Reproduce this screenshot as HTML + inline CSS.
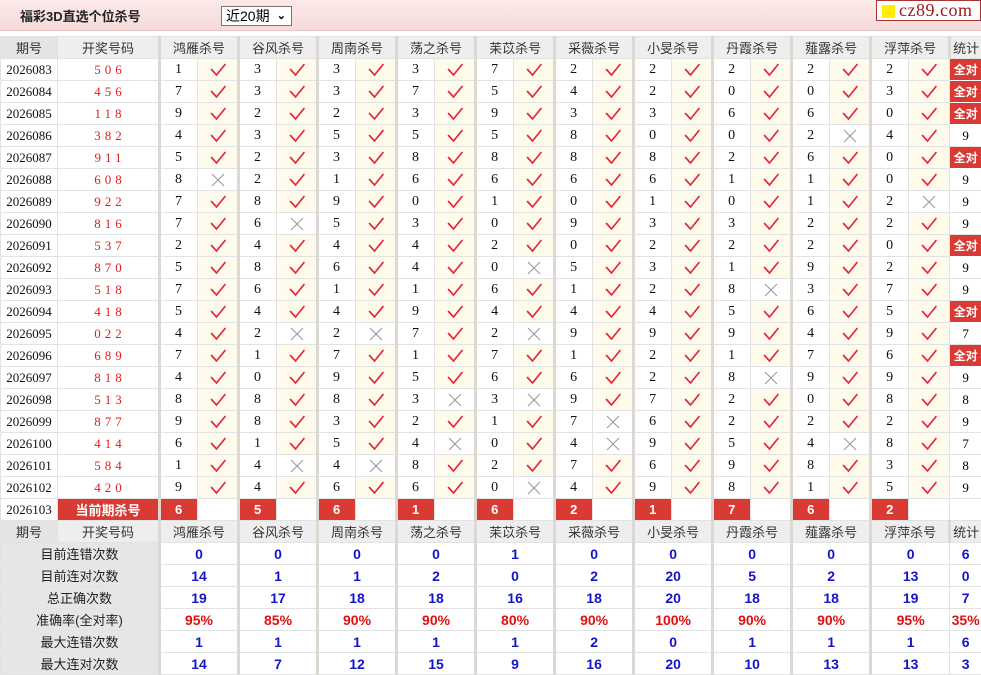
<!DOCTYPE html>
<html><head><meta charset="utf-8"><style>
*{margin:0;padding:0;box-sizing:border-box}
body{width:981px;height:673px;overflow:hidden;background:#fff;font-family:"Liberation Sans","Noto Sans CJK SC",sans-serif;position:relative}
.top{position:absolute;left:0;top:0;width:981px;height:31px;background:linear-gradient(#fbeaea,#f6dada);border-bottom:1px solid #e8c8c8}
.title{position:absolute;left:20px;top:6px;font-size:13px;font-weight:bold;color:#222}
.sel{position:absolute;left:221px;top:6px;width:71px;height:20px;border:1px solid #777;background:#fff;font-size:14px;line-height:18px;padding-left:4px;color:#000}
.sel span{position:absolute;right:5px;top:0;font-size:11px;font-weight:bold}
.logo{position:absolute;left:876px;top:0;width:105px;height:21px;background:#fff;border:1px solid #a33;font-family:"Liberation Serif",serif;font-size:18px;color:#a01818;line-height:19px;padding-left:22px;letter-spacing:.5px}
.logo i{position:absolute;left:5px;top:4px;width:13px;height:13px;background:#ffee00}
table{position:absolute;left:0;top:36px;border-collapse:collapse;table-layout:fixed;width:981px}
td{height:22px;border:1px solid #e2e2e2;font-size:13px;text-align:center;padding:0;overflow:hidden;white-space:nowrap}
tr.h td{background:#eeeeee;color:#333;font-size:13px}
tr.h td.g{border-left:3px solid #dcd9d2}
td.q{font-family:"Liberation Serif",serif;color:#111;font-size:13px}
td.w{font-family:"Liberation Serif",serif;color:#e02020;letter-spacing:4px;font-size:13px;padding-left:4px}
td.n{border-left:3px solid #dcd9d2;text-align:left;padding-left:14px;font-family:"Liberation Serif",serif;font-size:14px;color:#111}
td.k{background:#fffbec}
td.x{background:#fff}
td.s{font-family:"Liberation Serif",serif;font-size:13px}
td.a{background:#d93b34;color:#fff;font-weight:bold;font-size:12px;border:1px solid #fff}
td.cur{background:#d93b34;color:#fff;font-weight:bold;font-size:13px;border-left:3px solid #dcd9d2;text-align:left;padding-left:14px}
td.curl{background:#d93b34;color:#fff;font-weight:bold;font-size:13px}
td.lab{background:#e6e6e6;color:#222;font-size:13px}
td.v{border-left:3px solid #dcd9d2;color:#1414c8;font-weight:bold;font-size:14px}
td.r{border-left:3px solid #dcd9d2;color:#e01010;font-weight:bold;font-size:14px}
td.sv{color:#1414c8;font-weight:bold;font-size:14px}
td.sr{color:#e01010;font-weight:bold;font-size:14px}
svg{display:block;margin:0 auto}
</style></head><body>
<svg width="0" height="0" style="position:absolute"><defs>
<g id="c"><path d="M3.5 8.5 L8.5 14 L17 3.5" fill="none" stroke="#e2283c" stroke-width="1.7" stroke-linecap="round" stroke-linejoin="miter"/></g>
<g id="x"><path d="M4 3 L16 15 M16 3 L4 15" fill="none" stroke="#9a9a9a" stroke-width="1.1"/></g>
</defs></svg>
<div class="top"><div class="title">福彩3D直选个位杀号</div><div class="sel">近20期<span>&#8964;</span></div></div>
<div class="logo"><i></i>cz89.com</div>
<table>
<colgroup><col style="width:57px"><col style="width:102px">
<col style="width:38px"><col style="width:41px"><col style="width:38px"><col style="width:41px"><col style="width:38px"><col style="width:41px"><col style="width:38px"><col style="width:41px"><col style="width:38px"><col style="width:41px"><col style="width:38px"><col style="width:41px"><col style="width:38px"><col style="width:41px"><col style="width:38px"><col style="width:41px"><col style="width:38px"><col style="width:41px"><col style="width:38px"><col style="width:41px"><col style="width:32px"></colgroup>
<tr class="h"><td style="background:#e4e4e4">期号</td><td>开奖号码</td><td class="g" colspan="2">鸿雁杀号</td><td class="g" colspan="2">谷风杀号</td><td class="g" colspan="2">周南杀号</td><td class="g" colspan="2">荡之杀号</td><td class="g" colspan="2">苿苡杀号</td><td class="g" colspan="2">采薇杀号</td><td class="g" colspan="2">小旻杀号</td><td class="g" colspan="2">丹霞杀号</td><td class="g" colspan="2">薤露杀号</td><td class="g" colspan="2">浮萍杀号</td><td class="g">统计</td></tr>
<tr><td class="q">2026083</td><td class="w">506</td><td class="n">1</td><td class="k"><svg width="20" height="18"><use href="#c"/></svg></td><td class="n">3</td><td class="k"><svg width="20" height="18"><use href="#c"/></svg></td><td class="n">3</td><td class="k"><svg width="20" height="18"><use href="#c"/></svg></td><td class="n">3</td><td class="k"><svg width="20" height="18"><use href="#c"/></svg></td><td class="n">7</td><td class="k"><svg width="20" height="18"><use href="#c"/></svg></td><td class="n">2</td><td class="k"><svg width="20" height="18"><use href="#c"/></svg></td><td class="n">2</td><td class="k"><svg width="20" height="18"><use href="#c"/></svg></td><td class="n">2</td><td class="k"><svg width="20" height="18"><use href="#c"/></svg></td><td class="n">2</td><td class="k"><svg width="20" height="18"><use href="#c"/></svg></td><td class="n">2</td><td class="k"><svg width="20" height="18"><use href="#c"/></svg></td><td class="a">全对</td></tr>
<tr><td class="q">2026084</td><td class="w">456</td><td class="n">7</td><td class="k"><svg width="20" height="18"><use href="#c"/></svg></td><td class="n">3</td><td class="k"><svg width="20" height="18"><use href="#c"/></svg></td><td class="n">3</td><td class="k"><svg width="20" height="18"><use href="#c"/></svg></td><td class="n">7</td><td class="k"><svg width="20" height="18"><use href="#c"/></svg></td><td class="n">5</td><td class="k"><svg width="20" height="18"><use href="#c"/></svg></td><td class="n">4</td><td class="k"><svg width="20" height="18"><use href="#c"/></svg></td><td class="n">2</td><td class="k"><svg width="20" height="18"><use href="#c"/></svg></td><td class="n">0</td><td class="k"><svg width="20" height="18"><use href="#c"/></svg></td><td class="n">0</td><td class="k"><svg width="20" height="18"><use href="#c"/></svg></td><td class="n">3</td><td class="k"><svg width="20" height="18"><use href="#c"/></svg></td><td class="a">全对</td></tr>
<tr><td class="q">2026085</td><td class="w">118</td><td class="n">9</td><td class="k"><svg width="20" height="18"><use href="#c"/></svg></td><td class="n">2</td><td class="k"><svg width="20" height="18"><use href="#c"/></svg></td><td class="n">2</td><td class="k"><svg width="20" height="18"><use href="#c"/></svg></td><td class="n">3</td><td class="k"><svg width="20" height="18"><use href="#c"/></svg></td><td class="n">9</td><td class="k"><svg width="20" height="18"><use href="#c"/></svg></td><td class="n">3</td><td class="k"><svg width="20" height="18"><use href="#c"/></svg></td><td class="n">3</td><td class="k"><svg width="20" height="18"><use href="#c"/></svg></td><td class="n">6</td><td class="k"><svg width="20" height="18"><use href="#c"/></svg></td><td class="n">6</td><td class="k"><svg width="20" height="18"><use href="#c"/></svg></td><td class="n">0</td><td class="k"><svg width="20" height="18"><use href="#c"/></svg></td><td class="a">全对</td></tr>
<tr><td class="q">2026086</td><td class="w">382</td><td class="n">4</td><td class="k"><svg width="20" height="18"><use href="#c"/></svg></td><td class="n">3</td><td class="k"><svg width="20" height="18"><use href="#c"/></svg></td><td class="n">5</td><td class="k"><svg width="20" height="18"><use href="#c"/></svg></td><td class="n">5</td><td class="k"><svg width="20" height="18"><use href="#c"/></svg></td><td class="n">5</td><td class="k"><svg width="20" height="18"><use href="#c"/></svg></td><td class="n">8</td><td class="k"><svg width="20" height="18"><use href="#c"/></svg></td><td class="n">0</td><td class="k"><svg width="20" height="18"><use href="#c"/></svg></td><td class="n">0</td><td class="k"><svg width="20" height="18"><use href="#c"/></svg></td><td class="n">2</td><td class="x"><svg width="20" height="18"><use href="#x"/></svg></td><td class="n">4</td><td class="k"><svg width="20" height="18"><use href="#c"/></svg></td><td class="s">9</td></tr>
<tr><td class="q">2026087</td><td class="w">911</td><td class="n">5</td><td class="k"><svg width="20" height="18"><use href="#c"/></svg></td><td class="n">2</td><td class="k"><svg width="20" height="18"><use href="#c"/></svg></td><td class="n">3</td><td class="k"><svg width="20" height="18"><use href="#c"/></svg></td><td class="n">8</td><td class="k"><svg width="20" height="18"><use href="#c"/></svg></td><td class="n">8</td><td class="k"><svg width="20" height="18"><use href="#c"/></svg></td><td class="n">8</td><td class="k"><svg width="20" height="18"><use href="#c"/></svg></td><td class="n">8</td><td class="k"><svg width="20" height="18"><use href="#c"/></svg></td><td class="n">2</td><td class="k"><svg width="20" height="18"><use href="#c"/></svg></td><td class="n">6</td><td class="k"><svg width="20" height="18"><use href="#c"/></svg></td><td class="n">0</td><td class="k"><svg width="20" height="18"><use href="#c"/></svg></td><td class="a">全对</td></tr>
<tr><td class="q">2026088</td><td class="w">608</td><td class="n">8</td><td class="x"><svg width="20" height="18"><use href="#x"/></svg></td><td class="n">2</td><td class="k"><svg width="20" height="18"><use href="#c"/></svg></td><td class="n">1</td><td class="k"><svg width="20" height="18"><use href="#c"/></svg></td><td class="n">6</td><td class="k"><svg width="20" height="18"><use href="#c"/></svg></td><td class="n">6</td><td class="k"><svg width="20" height="18"><use href="#c"/></svg></td><td class="n">6</td><td class="k"><svg width="20" height="18"><use href="#c"/></svg></td><td class="n">6</td><td class="k"><svg width="20" height="18"><use href="#c"/></svg></td><td class="n">1</td><td class="k"><svg width="20" height="18"><use href="#c"/></svg></td><td class="n">1</td><td class="k"><svg width="20" height="18"><use href="#c"/></svg></td><td class="n">0</td><td class="k"><svg width="20" height="18"><use href="#c"/></svg></td><td class="s">9</td></tr>
<tr><td class="q">2026089</td><td class="w">922</td><td class="n">7</td><td class="k"><svg width="20" height="18"><use href="#c"/></svg></td><td class="n">8</td><td class="k"><svg width="20" height="18"><use href="#c"/></svg></td><td class="n">9</td><td class="k"><svg width="20" height="18"><use href="#c"/></svg></td><td class="n">0</td><td class="k"><svg width="20" height="18"><use href="#c"/></svg></td><td class="n">1</td><td class="k"><svg width="20" height="18"><use href="#c"/></svg></td><td class="n">0</td><td class="k"><svg width="20" height="18"><use href="#c"/></svg></td><td class="n">1</td><td class="k"><svg width="20" height="18"><use href="#c"/></svg></td><td class="n">0</td><td class="k"><svg width="20" height="18"><use href="#c"/></svg></td><td class="n">1</td><td class="k"><svg width="20" height="18"><use href="#c"/></svg></td><td class="n">2</td><td class="x"><svg width="20" height="18"><use href="#x"/></svg></td><td class="s">9</td></tr>
<tr><td class="q">2026090</td><td class="w">816</td><td class="n">7</td><td class="k"><svg width="20" height="18"><use href="#c"/></svg></td><td class="n">6</td><td class="x"><svg width="20" height="18"><use href="#x"/></svg></td><td class="n">5</td><td class="k"><svg width="20" height="18"><use href="#c"/></svg></td><td class="n">3</td><td class="k"><svg width="20" height="18"><use href="#c"/></svg></td><td class="n">0</td><td class="k"><svg width="20" height="18"><use href="#c"/></svg></td><td class="n">9</td><td class="k"><svg width="20" height="18"><use href="#c"/></svg></td><td class="n">3</td><td class="k"><svg width="20" height="18"><use href="#c"/></svg></td><td class="n">3</td><td class="k"><svg width="20" height="18"><use href="#c"/></svg></td><td class="n">2</td><td class="k"><svg width="20" height="18"><use href="#c"/></svg></td><td class="n">2</td><td class="k"><svg width="20" height="18"><use href="#c"/></svg></td><td class="s">9</td></tr>
<tr><td class="q">2026091</td><td class="w">537</td><td class="n">2</td><td class="k"><svg width="20" height="18"><use href="#c"/></svg></td><td class="n">4</td><td class="k"><svg width="20" height="18"><use href="#c"/></svg></td><td class="n">4</td><td class="k"><svg width="20" height="18"><use href="#c"/></svg></td><td class="n">4</td><td class="k"><svg width="20" height="18"><use href="#c"/></svg></td><td class="n">2</td><td class="k"><svg width="20" height="18"><use href="#c"/></svg></td><td class="n">0</td><td class="k"><svg width="20" height="18"><use href="#c"/></svg></td><td class="n">2</td><td class="k"><svg width="20" height="18"><use href="#c"/></svg></td><td class="n">2</td><td class="k"><svg width="20" height="18"><use href="#c"/></svg></td><td class="n">2</td><td class="k"><svg width="20" height="18"><use href="#c"/></svg></td><td class="n">0</td><td class="k"><svg width="20" height="18"><use href="#c"/></svg></td><td class="a">全对</td></tr>
<tr><td class="q">2026092</td><td class="w">870</td><td class="n">5</td><td class="k"><svg width="20" height="18"><use href="#c"/></svg></td><td class="n">8</td><td class="k"><svg width="20" height="18"><use href="#c"/></svg></td><td class="n">6</td><td class="k"><svg width="20" height="18"><use href="#c"/></svg></td><td class="n">4</td><td class="k"><svg width="20" height="18"><use href="#c"/></svg></td><td class="n">0</td><td class="x"><svg width="20" height="18"><use href="#x"/></svg></td><td class="n">5</td><td class="k"><svg width="20" height="18"><use href="#c"/></svg></td><td class="n">3</td><td class="k"><svg width="20" height="18"><use href="#c"/></svg></td><td class="n">1</td><td class="k"><svg width="20" height="18"><use href="#c"/></svg></td><td class="n">9</td><td class="k"><svg width="20" height="18"><use href="#c"/></svg></td><td class="n">2</td><td class="k"><svg width="20" height="18"><use href="#c"/></svg></td><td class="s">9</td></tr>
<tr><td class="q">2026093</td><td class="w">518</td><td class="n">7</td><td class="k"><svg width="20" height="18"><use href="#c"/></svg></td><td class="n">6</td><td class="k"><svg width="20" height="18"><use href="#c"/></svg></td><td class="n">1</td><td class="k"><svg width="20" height="18"><use href="#c"/></svg></td><td class="n">1</td><td class="k"><svg width="20" height="18"><use href="#c"/></svg></td><td class="n">6</td><td class="k"><svg width="20" height="18"><use href="#c"/></svg></td><td class="n">1</td><td class="k"><svg width="20" height="18"><use href="#c"/></svg></td><td class="n">2</td><td class="k"><svg width="20" height="18"><use href="#c"/></svg></td><td class="n">8</td><td class="x"><svg width="20" height="18"><use href="#x"/></svg></td><td class="n">3</td><td class="k"><svg width="20" height="18"><use href="#c"/></svg></td><td class="n">7</td><td class="k"><svg width="20" height="18"><use href="#c"/></svg></td><td class="s">9</td></tr>
<tr><td class="q">2026094</td><td class="w">418</td><td class="n">5</td><td class="k"><svg width="20" height="18"><use href="#c"/></svg></td><td class="n">4</td><td class="k"><svg width="20" height="18"><use href="#c"/></svg></td><td class="n">4</td><td class="k"><svg width="20" height="18"><use href="#c"/></svg></td><td class="n">9</td><td class="k"><svg width="20" height="18"><use href="#c"/></svg></td><td class="n">4</td><td class="k"><svg width="20" height="18"><use href="#c"/></svg></td><td class="n">4</td><td class="k"><svg width="20" height="18"><use href="#c"/></svg></td><td class="n">4</td><td class="k"><svg width="20" height="18"><use href="#c"/></svg></td><td class="n">5</td><td class="k"><svg width="20" height="18"><use href="#c"/></svg></td><td class="n">6</td><td class="k"><svg width="20" height="18"><use href="#c"/></svg></td><td class="n">5</td><td class="k"><svg width="20" height="18"><use href="#c"/></svg></td><td class="a">全对</td></tr>
<tr><td class="q">2026095</td><td class="w">022</td><td class="n">4</td><td class="k"><svg width="20" height="18"><use href="#c"/></svg></td><td class="n">2</td><td class="x"><svg width="20" height="18"><use href="#x"/></svg></td><td class="n">2</td><td class="x"><svg width="20" height="18"><use href="#x"/></svg></td><td class="n">7</td><td class="k"><svg width="20" height="18"><use href="#c"/></svg></td><td class="n">2</td><td class="x"><svg width="20" height="18"><use href="#x"/></svg></td><td class="n">9</td><td class="k"><svg width="20" height="18"><use href="#c"/></svg></td><td class="n">9</td><td class="k"><svg width="20" height="18"><use href="#c"/></svg></td><td class="n">9</td><td class="k"><svg width="20" height="18"><use href="#c"/></svg></td><td class="n">4</td><td class="k"><svg width="20" height="18"><use href="#c"/></svg></td><td class="n">9</td><td class="k"><svg width="20" height="18"><use href="#c"/></svg></td><td class="s">7</td></tr>
<tr><td class="q">2026096</td><td class="w">689</td><td class="n">7</td><td class="k"><svg width="20" height="18"><use href="#c"/></svg></td><td class="n">1</td><td class="k"><svg width="20" height="18"><use href="#c"/></svg></td><td class="n">7</td><td class="k"><svg width="20" height="18"><use href="#c"/></svg></td><td class="n">1</td><td class="k"><svg width="20" height="18"><use href="#c"/></svg></td><td class="n">7</td><td class="k"><svg width="20" height="18"><use href="#c"/></svg></td><td class="n">1</td><td class="k"><svg width="20" height="18"><use href="#c"/></svg></td><td class="n">2</td><td class="k"><svg width="20" height="18"><use href="#c"/></svg></td><td class="n">1</td><td class="k"><svg width="20" height="18"><use href="#c"/></svg></td><td class="n">7</td><td class="k"><svg width="20" height="18"><use href="#c"/></svg></td><td class="n">6</td><td class="k"><svg width="20" height="18"><use href="#c"/></svg></td><td class="a">全对</td></tr>
<tr><td class="q">2026097</td><td class="w">818</td><td class="n">4</td><td class="k"><svg width="20" height="18"><use href="#c"/></svg></td><td class="n">0</td><td class="k"><svg width="20" height="18"><use href="#c"/></svg></td><td class="n">9</td><td class="k"><svg width="20" height="18"><use href="#c"/></svg></td><td class="n">5</td><td class="k"><svg width="20" height="18"><use href="#c"/></svg></td><td class="n">6</td><td class="k"><svg width="20" height="18"><use href="#c"/></svg></td><td class="n">6</td><td class="k"><svg width="20" height="18"><use href="#c"/></svg></td><td class="n">2</td><td class="k"><svg width="20" height="18"><use href="#c"/></svg></td><td class="n">8</td><td class="x"><svg width="20" height="18"><use href="#x"/></svg></td><td class="n">9</td><td class="k"><svg width="20" height="18"><use href="#c"/></svg></td><td class="n">9</td><td class="k"><svg width="20" height="18"><use href="#c"/></svg></td><td class="s">9</td></tr>
<tr><td class="q">2026098</td><td class="w">513</td><td class="n">8</td><td class="k"><svg width="20" height="18"><use href="#c"/></svg></td><td class="n">8</td><td class="k"><svg width="20" height="18"><use href="#c"/></svg></td><td class="n">8</td><td class="k"><svg width="20" height="18"><use href="#c"/></svg></td><td class="n">3</td><td class="x"><svg width="20" height="18"><use href="#x"/></svg></td><td class="n">3</td><td class="x"><svg width="20" height="18"><use href="#x"/></svg></td><td class="n">9</td><td class="k"><svg width="20" height="18"><use href="#c"/></svg></td><td class="n">7</td><td class="k"><svg width="20" height="18"><use href="#c"/></svg></td><td class="n">2</td><td class="k"><svg width="20" height="18"><use href="#c"/></svg></td><td class="n">0</td><td class="k"><svg width="20" height="18"><use href="#c"/></svg></td><td class="n">8</td><td class="k"><svg width="20" height="18"><use href="#c"/></svg></td><td class="s">8</td></tr>
<tr><td class="q">2026099</td><td class="w">877</td><td class="n">9</td><td class="k"><svg width="20" height="18"><use href="#c"/></svg></td><td class="n">8</td><td class="k"><svg width="20" height="18"><use href="#c"/></svg></td><td class="n">3</td><td class="k"><svg width="20" height="18"><use href="#c"/></svg></td><td class="n">2</td><td class="k"><svg width="20" height="18"><use href="#c"/></svg></td><td class="n">1</td><td class="k"><svg width="20" height="18"><use href="#c"/></svg></td><td class="n">7</td><td class="x"><svg width="20" height="18"><use href="#x"/></svg></td><td class="n">6</td><td class="k"><svg width="20" height="18"><use href="#c"/></svg></td><td class="n">2</td><td class="k"><svg width="20" height="18"><use href="#c"/></svg></td><td class="n">2</td><td class="k"><svg width="20" height="18"><use href="#c"/></svg></td><td class="n">2</td><td class="k"><svg width="20" height="18"><use href="#c"/></svg></td><td class="s">9</td></tr>
<tr><td class="q">2026100</td><td class="w">414</td><td class="n">6</td><td class="k"><svg width="20" height="18"><use href="#c"/></svg></td><td class="n">1</td><td class="k"><svg width="20" height="18"><use href="#c"/></svg></td><td class="n">5</td><td class="k"><svg width="20" height="18"><use href="#c"/></svg></td><td class="n">4</td><td class="x"><svg width="20" height="18"><use href="#x"/></svg></td><td class="n">0</td><td class="k"><svg width="20" height="18"><use href="#c"/></svg></td><td class="n">4</td><td class="x"><svg width="20" height="18"><use href="#x"/></svg></td><td class="n">9</td><td class="k"><svg width="20" height="18"><use href="#c"/></svg></td><td class="n">5</td><td class="k"><svg width="20" height="18"><use href="#c"/></svg></td><td class="n">4</td><td class="x"><svg width="20" height="18"><use href="#x"/></svg></td><td class="n">8</td><td class="k"><svg width="20" height="18"><use href="#c"/></svg></td><td class="s">7</td></tr>
<tr><td class="q">2026101</td><td class="w">584</td><td class="n">1</td><td class="k"><svg width="20" height="18"><use href="#c"/></svg></td><td class="n">4</td><td class="x"><svg width="20" height="18"><use href="#x"/></svg></td><td class="n">4</td><td class="x"><svg width="20" height="18"><use href="#x"/></svg></td><td class="n">8</td><td class="k"><svg width="20" height="18"><use href="#c"/></svg></td><td class="n">2</td><td class="k"><svg width="20" height="18"><use href="#c"/></svg></td><td class="n">7</td><td class="k"><svg width="20" height="18"><use href="#c"/></svg></td><td class="n">6</td><td class="k"><svg width="20" height="18"><use href="#c"/></svg></td><td class="n">9</td><td class="k"><svg width="20" height="18"><use href="#c"/></svg></td><td class="n">8</td><td class="k"><svg width="20" height="18"><use href="#c"/></svg></td><td class="n">3</td><td class="k"><svg width="20" height="18"><use href="#c"/></svg></td><td class="s">8</td></tr>
<tr><td class="q">2026102</td><td class="w">420</td><td class="n">9</td><td class="k"><svg width="20" height="18"><use href="#c"/></svg></td><td class="n">4</td><td class="k"><svg width="20" height="18"><use href="#c"/></svg></td><td class="n">6</td><td class="k"><svg width="20" height="18"><use href="#c"/></svg></td><td class="n">6</td><td class="k"><svg width="20" height="18"><use href="#c"/></svg></td><td class="n">0</td><td class="x"><svg width="20" height="18"><use href="#x"/></svg></td><td class="n">4</td><td class="k"><svg width="20" height="18"><use href="#c"/></svg></td><td class="n">9</td><td class="k"><svg width="20" height="18"><use href="#c"/></svg></td><td class="n">8</td><td class="k"><svg width="20" height="18"><use href="#c"/></svg></td><td class="n">1</td><td class="k"><svg width="20" height="18"><use href="#c"/></svg></td><td class="n">5</td><td class="k"><svg width="20" height="18"><use href="#c"/></svg></td><td class="s">9</td></tr>
<tr><td class="q">2026103</td><td class="curl">当前期杀号</td><td class="cur">6</td><td></td><td class="cur">5</td><td></td><td class="cur">6</td><td></td><td class="cur">1</td><td></td><td class="cur">6</td><td></td><td class="cur">2</td><td></td><td class="cur">1</td><td></td><td class="cur">7</td><td></td><td class="cur">6</td><td></td><td class="cur">2</td><td></td><td></td></tr>
<tr class="h"><td style="background:#e4e4e4">期号</td><td>开奖号码</td><td class="g" colspan="2">鸿雁杀号</td><td class="g" colspan="2">谷风杀号</td><td class="g" colspan="2">周南杀号</td><td class="g" colspan="2">荡之杀号</td><td class="g" colspan="2">苿苡杀号</td><td class="g" colspan="2">采薇杀号</td><td class="g" colspan="2">小旻杀号</td><td class="g" colspan="2">丹霞杀号</td><td class="g" colspan="2">薤露杀号</td><td class="g" colspan="2">浮萍杀号</td><td class="g">统计</td></tr>
<tr><td class="lab" colspan="2">目前连错次数</td><td class="v" colspan="2">0</td><td class="v" colspan="2">0</td><td class="v" colspan="2">0</td><td class="v" colspan="2">0</td><td class="v" colspan="2">1</td><td class="v" colspan="2">0</td><td class="v" colspan="2">0</td><td class="v" colspan="2">0</td><td class="v" colspan="2">0</td><td class="v" colspan="2">0</td><td class="sv">6</td></tr>
<tr><td class="lab" colspan="2">目前连对次数</td><td class="v" colspan="2">14</td><td class="v" colspan="2">1</td><td class="v" colspan="2">1</td><td class="v" colspan="2">2</td><td class="v" colspan="2">0</td><td class="v" colspan="2">2</td><td class="v" colspan="2">20</td><td class="v" colspan="2">5</td><td class="v" colspan="2">2</td><td class="v" colspan="2">13</td><td class="sv">0</td></tr>
<tr><td class="lab" colspan="2">总正确次数</td><td class="v" colspan="2">19</td><td class="v" colspan="2">17</td><td class="v" colspan="2">18</td><td class="v" colspan="2">18</td><td class="v" colspan="2">16</td><td class="v" colspan="2">18</td><td class="v" colspan="2">20</td><td class="v" colspan="2">18</td><td class="v" colspan="2">18</td><td class="v" colspan="2">19</td><td class="sv">7</td></tr>
<tr><td class="lab" colspan="2">准确率(全对率)</td><td class="r" colspan="2">95%</td><td class="r" colspan="2">85%</td><td class="r" colspan="2">90%</td><td class="r" colspan="2">90%</td><td class="r" colspan="2">80%</td><td class="r" colspan="2">90%</td><td class="r" colspan="2">100%</td><td class="r" colspan="2">90%</td><td class="r" colspan="2">90%</td><td class="r" colspan="2">95%</td><td class="sr">35%</td></tr>
<tr><td class="lab" colspan="2">最大连错次数</td><td class="v" colspan="2">1</td><td class="v" colspan="2">1</td><td class="v" colspan="2">1</td><td class="v" colspan="2">1</td><td class="v" colspan="2">1</td><td class="v" colspan="2">2</td><td class="v" colspan="2">0</td><td class="v" colspan="2">1</td><td class="v" colspan="2">1</td><td class="v" colspan="2">1</td><td class="sv">6</td></tr>
<tr><td class="lab" colspan="2">最大连对次数</td><td class="v" colspan="2">14</td><td class="v" colspan="2">7</td><td class="v" colspan="2">12</td><td class="v" colspan="2">15</td><td class="v" colspan="2">9</td><td class="v" colspan="2">16</td><td class="v" colspan="2">20</td><td class="v" colspan="2">10</td><td class="v" colspan="2">13</td><td class="v" colspan="2">13</td><td class="sv">3</td></tr>
</table>
</body></html>
